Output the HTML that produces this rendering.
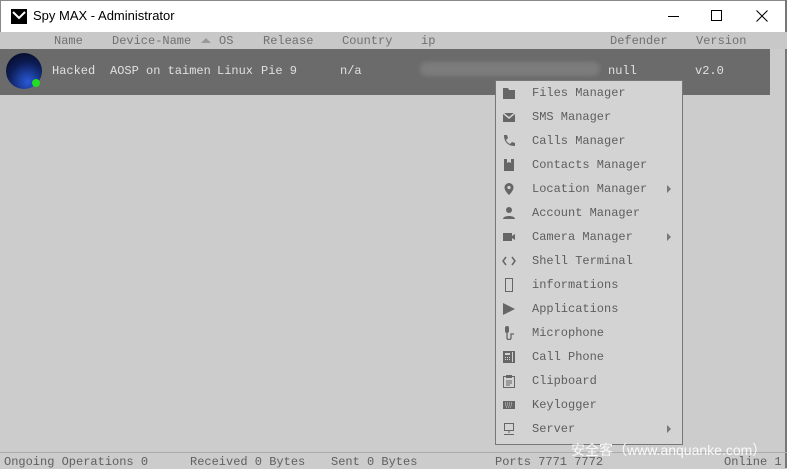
<!DOCTYPE html>
<html><head><meta charset="utf-8"><style>
*{margin:0;padding:0;box-sizing:border-box}
body{width:787px;height:468px;overflow:hidden;background:#cccccc;position:relative;font-family:"Liberation Mono",monospace;font-size:12px}
.abs{position:absolute;white-space:nowrap}
#title{left:0;top:0;width:787px;height:32px;background:#fff;border:1px solid #888;border-bottom:none}
#hdr{left:0;top:32px;width:787px;height:17px;background:#c8c8c8;color:#707070}
#row{left:0;top:49px;width:770px;height:46px;background:#6b6b6b;color:#e0e0e0}
#menu{left:495px;top:80px;width:188px;height:365px;background:#d3d3d3;border:1px solid #777}
.it{position:absolute;left:36px;color:#5e5e5e;font-size:12px}
.ic{position:absolute;left:6px;width:14px;height:14px}
.ar{position:absolute;left:171px;width:0;height:0;border-left:4px solid #777;border-top:4px solid transparent;border-bottom:4px solid transparent}
#status{left:0;top:452px;width:787px;height:16px;border-top:1px solid #aaa;color:#606060}
</style></head><body>
<div class="abs" id="title">
 <svg class="abs" style="left:10px;top:8px" width="16" height="15"><rect width="16" height="15" fill="#000"/><path d="M2 3 L8 9 L14 3" stroke="#fff" stroke-width="2" fill="none"/></svg>
 <span class="abs" style="left:32px;top:7px;font-family:'Liberation Sans','Noto Sans CJK SC',sans-serif;font-size:13px;color:#000">Spy MAX - Administrator</span>
 <div class="abs" style="left:667px;top:15px;width:11px;height:1px;background:#000"></div>
 <div class="abs" style="left:710px;top:9px;width:11px;height:11px;border:1px solid #000"></div>
 <svg class="abs" style="left:755px;top:9px" width="12" height="12"><path d="M0.5 0.5L11.5 11.5M11.5 0.5L0.5 11.5" stroke="#000"/></svg>
</div>
<div class="abs" style="left:785px;top:0;width:2px;height:468px;background:#777"></div>
<div class="abs" id="hdr">
 <span class="abs" style="left:54px;top:2px">Name</span>
 <span class="abs" style="left:112px;top:2px">Device-Name</span>
 <div class="abs" style="left:201px;top:6px;border-bottom:5px solid #999;border-left:5px solid transparent;border-right:5px solid transparent"></div>
 <span class="abs" style="left:219px;top:2px">OS</span>
 <span class="abs" style="left:263px;top:2px">Release</span>
 <span class="abs" style="left:342px;top:2px">Country</span>
 <span class="abs" style="left:421px;top:2px">ip</span>
 <span class="abs" style="left:610px;top:2px">Defender</span>
 <span class="abs" style="left:696px;top:2px">Version</span>
</div>
<div class="abs" id="row">
 <svg class="abs" style="left:6px;top:4px" width="38" height="38"><defs><radialGradient id="g" cx="0.6" cy="0.8" r="0.9"><stop offset="0" stop-color="#2a5ad8"/><stop offset="0.6" stop-color="#0c1c55"/><stop offset="1" stop-color="#050a20"/></radialGradient></defs><circle cx="18" cy="18" r="18" fill="url(#g)"/><circle cx="30" cy="30" r="4" fill="#22dd22"/></svg>
 <span class="abs" style="left:52px;top:15px">Hacked</span>
 <span class="abs" style="left:110px;top:15px">AOSP on taimen</span>
 <span class="abs" style="left:217px;top:15px">Linux</span>
 <span class="abs" style="left:261px;top:15px">Pie 9</span>
 <span class="abs" style="left:340px;top:15px">n/a</span>
 <div class="abs" style="left:420px;top:13px;width:180px;height:14px;background:#7c7c7c;border-radius:7px;filter:blur(2px)"></div>
 <span class="abs" style="left:608px;top:15px">null</span>
 <span class="abs" style="left:695px;top:15px">v2.0</span>
</div>
<div class="abs" id="menu">
 <svg class="ic" style="top:5px"><path d="M1 2h5l1 2h6v9H1z" fill="#666"/></svg><span class="it" style="top:5px">Files Manager</span>
 <svg class="ic" style="top:29px"><path d="M1 3h12v9H1z" fill="#666"/><path d="M1 3l6 5 6-5" stroke="#d3d3d3" fill="none" stroke-width="1.5"/></svg><span class="it" style="top:29px">SMS Manager</span>
 <svg class="ic" style="top:53px"><path d="M2 1l3 0 1 3-2 2c1 2 2 3 4 4l2-2 3 1v3c-7 0-11-4-11-11z" fill="#666"/></svg><span class="it" style="top:53px">Calls Manager</span>
 <svg class="ic" style="top:77px"><path d="M2 1h10v12H2z" fill="#666"/><path d="M5 1v4l2-1 2 1V1" fill="#d3d3d3"/></svg><span class="it" style="top:77px">Contacts Manager</span>
 <svg class="ic" style="top:101px"><path d="M7 1a4.5 4.5 0 0 1 4.5 4.5C11.5 9 7 13 7 13S2.5 9 2.5 5.5A4.5 4.5 0 0 1 7 1z" fill="#666"/><circle cx="7" cy="5.5" r="1.6" fill="#d3d3d3"/></svg><span class="it" style="top:101px">Location Manager</span><div class="ar" style="top:104px"></div>
 <svg class="ic" style="top:125px"><circle cx="7" cy="4" r="3" fill="#666"/><path d="M1 13c0-4 12-4 12 0z" fill="#666"/></svg><span class="it" style="top:125px">Account Manager</span>
 <svg class="ic" style="top:149px"><path d="M1 3h9v8H1zM10 6l3-2v6l-3-2z" fill="#666"/></svg><span class="it" style="top:149px">Camera Manager</span><div class="ar" style="top:152px"></div>
 <svg class="ic" style="top:173px"><path d="M4 3L1 7l3 4M10 3l3 4-3 4" stroke="#666" stroke-width="1.5" fill="none"/></svg><span class="it" style="top:173px">Shell Terminal</span>
 <svg class="ic" style="top:197px"><rect x="3.5" y="0.5" width="7" height="13" stroke="#666" fill="none"/></svg><span class="it" style="top:197px">informations</span>
 <svg class="ic" style="top:221px"><path d="M1 1l12 6-12 6z" fill="#666"/></svg><span class="it" style="top:221px">Applications</span>
 <svg class="ic" style="top:245px"><rect x="3" y="0" width="4" height="7" rx="2" fill="#666"/><path d="M5 7v5c0 2 4 2 4 0V8h3" stroke="#666" stroke-width="1.3" fill="none"/></svg><span class="it" style="top:245px">Microphone</span>
 <svg class="ic" style="top:269px"><rect x="1" y="1" width="12" height="12" fill="#666"/><path d="M3 3h5v2H3zM3 7h1v1H3zM5 7h1v1H5zM7 7h1v1H7zM3 9h1v1H3zM5 9h1v1H5zM7 9h1v1H7zM10 2h1v10h-1z" fill="#d3d3d3"/></svg><span class="it" style="top:269px">Call Phone</span>
 <svg class="ic" style="top:293px"><rect x="1.5" y="2.5" width="11" height="11" stroke="#666" fill="none"/><rect x="4" y="1" width="6" height="3" fill="#666"/><path d="M4 7h6M4 9h6M4 11h4" stroke="#666"/></svg><span class="it" style="top:293px">Clipboard</span>
 <svg class="ic" style="top:317px"><rect x="1" y="3" width="12" height="8" fill="#666"/><path d="M3 5h8M3 7h8M4 9h6" stroke="#d3d3d3" stroke-dasharray="1 1"/></svg><span class="it" style="top:317px">Keylogger</span>
 <svg class="ic" style="top:341px"><rect x="2.5" y="1.5" width="9" height="7" stroke="#666" fill="none"/><path d="M7 9v2M2 12.5h10" stroke="#666"/></svg><span class="it" style="top:341px">Server</span><div class="ar" style="top:344px"></div>
</div>
<div class="abs" id="status">
 <span class="abs" style="left:4px;top:2px">Ongoing Operations 0</span>
 <span class="abs" style="left:190px;top:2px">Received 0 Bytes</span>
 <span class="abs" style="left:331px;top:2px">Sent 0 Bytes</span>
 <span class="abs" style="left:495px;top:2px">Ports 7771 7772</span>
 <span class="abs" style="left:724px;top:2px">Online 1</span>
</div>
<span class="abs" style="left:571px;top:440px;color:#fff;font-family:'Liberation Sans','Noto Sans CJK SC',sans-serif;font-size:14px;opacity:0.9">安全客（www.anquanke.com）</span>
</body></html>
